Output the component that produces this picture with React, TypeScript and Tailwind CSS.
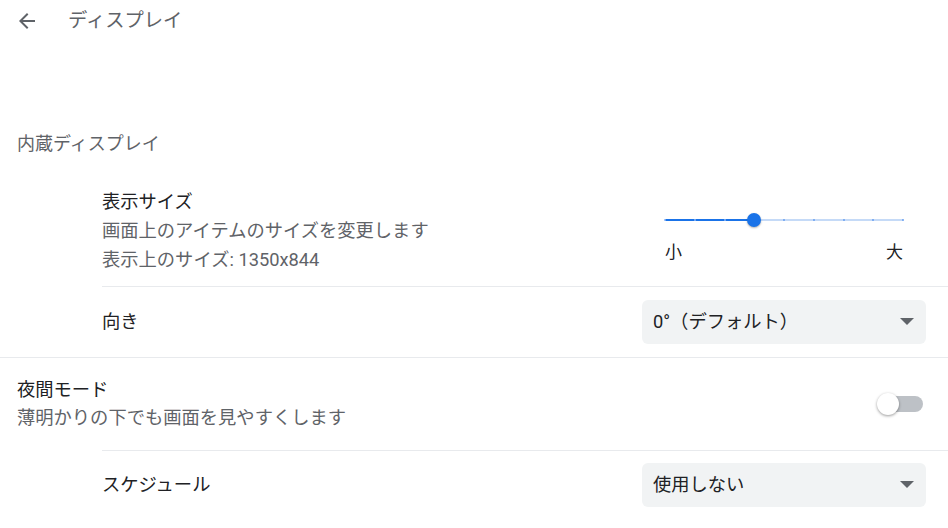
import React from 'react';

const font = { fontFamily: 'Roboto, "Noto Sans CJK JP", sans-serif' };

const SIZE_STEPS = 9;
const SIZE_INDEX = 3;

const BackArrow = () => (
  <svg width="24" height="24" viewBox="0 0 24 24" className="text-[#5f6368]">
    <path d="M20 11H7.83l5.59-5.59L12 4l-8 8 8 8 1.41-1.41L7.83 13H20v-2z" fill="currentColor" />
  </svg>
);

const Caret = () => (
  <svg width="14" height="8" viewBox="0 0 14 8">
    <path d="M0 0h14L7 7z" fill="#5f6368" />
  </svg>
);

const Select = ({ value }: { value: string }) => (
  <div className="flex items-center justify-between w-[284px] h-[44px] rounded-md bg-[#f1f3f4] pl-[11px] pr-[12px]">
    <span className="text-[18.3px] text-[#202124]">{value}</span>
    <Caret />
  </div>
);

const SizeSlider = () => {
  const pct = (SIZE_INDEX / (SIZE_STEPS - 1)) * 100;
  return (
    <div className="w-[238px] mr-[45px] flex flex-col">
      <div className="relative h-[14px] flex items-center">
        <div className="absolute left-0 right-0 h-[2px] bg-[#c5daf7]" />
        <div className="absolute left-0 h-[2px] bg-[#1a73e8]" style={{ width: `${pct}%` }} />
        {Array.from({ length: SIZE_STEPS }).map((_, i) => (
          <div
            key={i}
            className={`absolute w-[2px] h-[2px] rounded-full -ml-[1px] ${i < SIZE_INDEX ? 'bg-[#8ab4f8]' : 'bg-[#6aa1f0]'}`}
            style={{ left: `${(i / (SIZE_STEPS - 1)) * 100}%` }}
          />
        ))}
        <div
          className="absolute w-[14px] h-[14px] -ml-[7px] rounded-full bg-[#1a73e8] shadow-[0_1px_2px_rgba(0,0,0,0.3)]"
          style={{ left: `${pct}%` }}
        />
      </div>
      <div className="flex justify-between mt-[12px] text-[17px] text-[#202124] leading-[26px]">
        <span>小</span>
        <span>大</span>
      </div>
    </div>
  );
};

const Toggle = () => (
  <div className="relative w-[46px] h-[22px] flex items-center mr-[25px]">
    <div className="absolute right-0 w-[38px] h-[16px] rounded-full bg-[#bdc1c6]" />
    <div className="absolute left-0 w-[22px] h-[22px] rounded-full bg-white shadow-[0_1px_3px_rgba(0,0,0,0.4)]" />
  </div>
);

export default function App() {
  return (
    <div className="w-[948px] h-[528px] bg-white overflow-hidden" style={font}>
      <div className="flex items-center h-[42px] pl-[15px]">
        <BackArrow />
        <span className="ml-[29px] text-[19.3px] text-[#5f6368]">ディスプレイ</span>
      </div>

      <div className="mt-[88px] pl-[17px] text-[18px] leading-[28px] text-[#5f6368]">内蔵ディスプレイ</div>

      <div className="pl-[102px] mt-[29px]">
        <div className="flex items-start justify-between pb-[12px] border-b border-[#e8eaed]">
          <div className="text-[18.3px] leading-[29px]">
            <div className="text-[#202124]">表示サイズ</div>
            <div className="text-[#5f6368]">画面上のアイテムのサイズを変更します</div>
            <div className="text-[#5f6368]">表示上のサイズ: 1350x844</div>
          </div>
          <div className="pt-[26px]">
            <SizeSlider />
          </div>
        </div>
        <div className="flex items-center justify-between h-[70px] pr-[22px]">
          <span className="text-[18.3px] text-[#202124]">向き</span>
          <Select value="0°（デフォルト）" />
        </div>
      </div>

      <div className="border-t border-[#e8eaed]">
        <div className="flex items-center justify-between pl-[17px] h-[92px]">
          <div className="text-[18.3px] leading-[28px]">
            <div className="text-[#202124]">夜間モード</div>
            <div className="text-[#5f6368]">薄明かりの下でも画面を見やすくします</div>
          </div>
          <Toggle />
        </div>
        <div className="ml-[102px] border-t border-[#e8eaed] flex items-center justify-between h-[68px] pr-[22px]">
          <span className="text-[18.3px] text-[#202124]">スケジュール</span>
          <Select value="使用しない" />
        </div>
      </div>
    </div>
  );
}
